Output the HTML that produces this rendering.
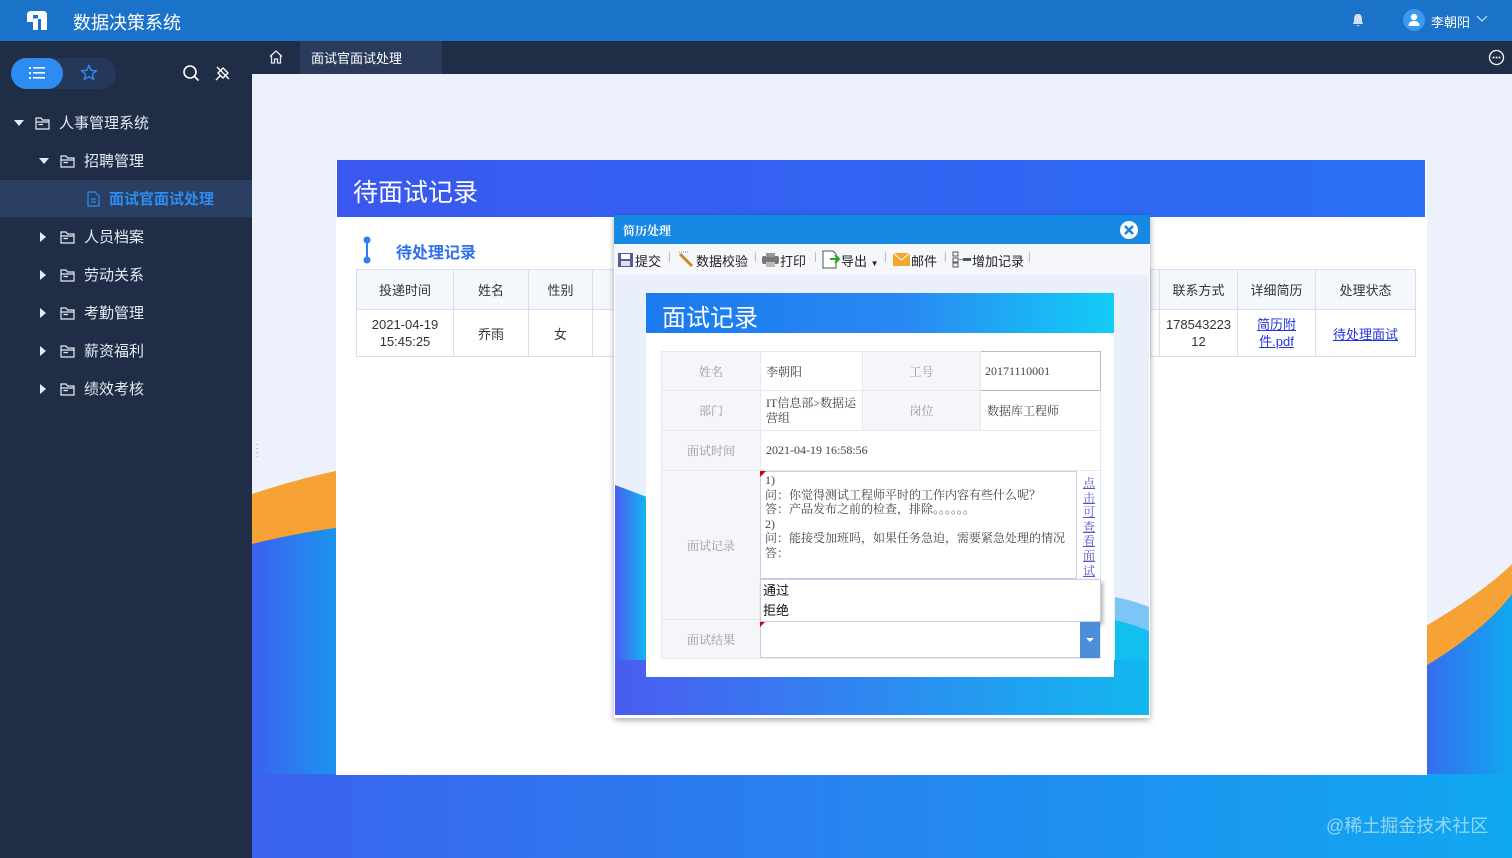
<!DOCTYPE html>
<html><head><meta charset="utf-8"><style>
*{margin:0;padding:0;box-sizing:border-box}
body{width:1512px;height:858px;overflow:hidden;position:relative;font-family:"Liberation Sans","Noto Sans CJK SC",sans-serif;background:#edf1fb}
.abs{position:absolute}
.top{left:0;top:0;width:1512px;height:41px;background:#1b73c9;color:#fff}
.side{left:0;top:41px;width:252px;height:817px;background:#1f2d47;color:#e6ebf3}
.tabs{left:252px;top:41px;width:1260px;height:33px;background:#1f2d47}
.nav{position:absolute;font-size:15px;color:#e6ebf3}
.tri{position:absolute;width:0;height:0}
table{border-collapse:collapse}
.lt td{border:1px solid #d9dff0;text-align:center;font-size:13px;color:#333}
.ft td{border:1px solid #e4e8f0;font-family:"Liberation Serif","Noto Serif CJK SC",serif;font-size:12px;color:#444}
.ft td.l{background:#f4f6fa;color:#999;text-align:center}
</style></head><body>
<div class="abs top">
 <svg class="abs" style="left:26px;top:10px" width="22" height="21"><path d="M1 5 Q1 1 5 1 H17 Q21 1 21 5 V20 H15 V9 H12 V20 H7 V12 H1 Z" fill="#fff"/><rect x="7" y="5" width="5" height="3.5" fill="#1b73c9"/></svg>
 <div class="abs" style="left:73px;top:9px;font-size:18px">数据决策系统</div>
 <svg class="abs" style="left:1352px;top:13px" width="12" height="14"><path d="M6 1 C2 1 2 5 2 8 L1 11 H11 L10 8 C10 5 10 1 6 1Z M4.5 12 H7.5 L6 13.5Z" fill="#cfe2f7"/></svg>
 <div class="abs" style="left:1403px;top:9px;width:22px;height:22px;border-radius:50%;background:#3a9af0"></div>
 <svg class="abs" style="left:1406px;top:12px" width="16" height="16"><circle cx="8" cy="5" r="3.2" fill="#fff"/><path d="M2.5 14 Q2.5 9 8 9 Q13.5 9 13.5 14Z" fill="#fff"/></svg>
 <div class="abs" style="left:1431px;top:12px;font-size:13px">李朝阳</div>
 <svg class="abs" style="left:1476px;top:15px" width="12" height="8"><path d="M1 1 L6 6 L11 1" stroke="#cfe2f7" fill="none" stroke-width="1.2"/></svg>
</div>
<div class="abs side">
 <div class="abs" style="left:11px;top:17px;width:105px;height:31px;border-radius:16px;background:#26385a"></div>
 <div class="abs" style="left:11px;top:17px;width:52px;height:31px;border-radius:16px;background:#2d8cf0"></div>
 <svg class="abs" style="left:29px;top:25px" width="16" height="14"><g fill="#fff"><rect x="0" y="1" width="2" height="2"/><rect x="4" y="1" width="12" height="1.6"/><rect x="0" y="6" width="2" height="2"/><rect x="4" y="6" width="12" height="1.6"/><rect x="0" y="11" width="2" height="2"/><rect x="4" y="11" width="12" height="1.6"/></g></svg>
 <svg class="abs" style="left:80px;top:23px" width="18" height="17"><path d="M9 1.5 L11.2 6.3 L16.3 6.8 L12.4 10.2 L13.6 15.2 L9 12.6 L4.4 15.2 L5.6 10.2 L1.7 6.8 L6.8 6.3Z" stroke="#2d8cf0" stroke-width="1.4" fill="none"/></svg>
 <svg class="abs" style="left:182px;top:23px" width="18" height="18"><circle cx="8" cy="8" r="6" stroke="#fff" stroke-width="1.6" fill="none"/><path d="M12.5 12.5 L16.5 16.5" stroke="#fff" stroke-width="1.8"/></svg>
 <svg class="abs" style="left:214px;top:23px" width="18" height="18"><path d="M4 9 L9 4 L14 9 L9 14Z M2 16 L6 12 M3 3 L15 15" stroke="#fff" stroke-width="1.4" fill="none"/></svg>
 <div class="abs" style="left:0;top:139px;width:252px;height:37px;background:#2a3f62"></div>
</div>
<div class="nav" style="left:0;top:0;width:252px">
 <div class="tri" style="left:14px;top:120px;border:5px solid transparent;border-top:6px solid #e6ebf3;border-bottom:0"></div>
 <div class="tri" style="left:39px;top:158px;border:5px solid transparent;border-top:6px solid #e6ebf3;border-bottom:0"></div>
 <div class="tri" style="left:40px;top:232px;border:5px solid transparent;border-left:6px solid #e6ebf3;border-right:0"></div>
 <div class="tri" style="left:40px;top:270px;border:5px solid transparent;border-left:6px solid #e6ebf3;border-right:0"></div>
 <div class="tri" style="left:40px;top:308px;border:5px solid transparent;border-left:6px solid #e6ebf3;border-right:0"></div>
 <div class="tri" style="left:40px;top:346px;border:5px solid transparent;border-left:6px solid #e6ebf3;border-right:0"></div>
 <div class="tri" style="left:40px;top:384px;border:5px solid transparent;border-left:6px solid #e6ebf3;border-right:0"></div>
</div>
<svg class="abs" style="left:0;top:0" width="252" height="400">
 <defs><g id="f"><path d="M1 2 H6 L7.5 4 H14 V13 H1Z M1 6 H14 M3.5 8.5 H8" stroke="#e6ebf3" stroke-width="1.2" fill="none"/></g></defs>
 <use href="#f" x="35" y="116"/><use href="#f" x="60" y="154"/><use href="#f" x="60" y="230"/><use href="#f" x="60" y="268"/><use href="#f" x="60" y="306"/><use href="#f" x="60" y="344"/><use href="#f" x="60" y="382"/>
 <path d="M88 192 H95 L99 196 V206 H88Z M91 199 H96 M91 202 H96" stroke="#2d8cf0" stroke-width="1.2" fill="none"/>
</svg>
<div class="nav" style="left:59px;top:112px">人事管理系统</div>
<div class="nav" style="left:84px;top:150px">招聘管理</div>
<div class="nav" style="left:109px;top:188px;color:#2d8cf0;font-weight:bold">面试官面试处理</div>
<div class="nav" style="left:84px;top:226px">人员档案</div>
<div class="nav" style="left:84px;top:264px">劳动关系</div>
<div class="nav" style="left:84px;top:302px">考勤管理</div>
<div class="nav" style="left:84px;top:340px">薪资福利</div>
<div class="nav" style="left:84px;top:378px">绩效考核</div>

<div class="abs tabs">
 <svg class="abs" style="left:16px;top:8px" width="16" height="16"><path d="M2 7.5 L8 2 L14 7.5 M3.5 6.5 V14 H6.5 V10 H9.5 V14 H12.5 V6.5" stroke="#e6ebf3" stroke-width="1.3" fill="none"/></svg>
 <div class="abs" style="left:48px;top:0;width:142px;height:33px;background:#2a3b5c;color:#fff;font-size:13px;padding:7px 0 0 11px">面试官面试处理</div>
 <svg class="abs" style="left:1236px;top:8px" width="17" height="17"><circle cx="8.5" cy="8.5" r="7" stroke="#fff" stroke-width="1.3" fill="none"/><g fill="#fff"><circle cx="5.5" cy="8.5" r="1"/><circle cx="8.5" cy="8.5" r="1"/><circle cx="11.5" cy="8.5" r="1"/></g></svg>
</div>
<div class="abs" style="left:252px;top:74px;width:1260px;height:784px;overflow:hidden">
 <svg width="1260" height="784">
  <defs><linearGradient id="bg" x1="0" x2="1"><stop offset="0" stop-color="#3b62ee"/><stop offset="1" stop-color="#10a8f0"/></linearGradient></defs>
  <path d="M0 420 Q60 400 120 390 L120 784 L0 784Z" fill="#f7a235"/>
  <path d="M0 470 Q60 455 120 450 L120 784 L0 784Z" fill="url(#bg)"/>
  <path d="M1160 560 Q1230 520 1260 490 V784 H1160Z" fill="#f7a235"/>
  <path d="M1160 600 Q1230 560 1260 520 V784 H1160Z" fill="url(#bg)"/>
  <rect x="0" y="700" width="1260" height="84" fill="url(#bg)"/>
 </svg>
 <div class="abs" style="left:4px;top:370px;color:#8a95aa;font-size:9px;line-height:4px">:<br>:<br>:</div>
</div>
<div class="abs" style="left:336px;top:160px;width:1091px;height:615px;background:#fff"></div>
<div class="abs" style="left:337px;top:160px;width:1088px;height:57px;background:linear-gradient(90deg,#3a58ee,#2a6ff6);color:#fff;font-size:25px;padding:13px 0 0 16px">待面试记录</div>
<svg class="abs" style="left:361px;top:236px" width="12" height="28"><circle cx="6" cy="4" r="3.5" fill="#2d7ff0"/><circle cx="6" cy="24" r="3.5" fill="#2d7ff0"/><rect x="5" y="4" width="2" height="20" fill="#2d7ff0"/></svg>
<div class="abs" style="left:396px;top:239px;color:#2d6ff0;font-size:16px;font-weight:bold">待处理记录</div>
<table class="abs lt" style="left:356px;top:269px">
 <tr style="height:40px;background:#f4f7fc"><td style="width:97px">投递时间</td><td style="width:75px">姓名</td><td style="width:64px">性别</td><td style="width:30px"></td></tr>
 <tr style="height:47px"><td style="line-height:17px">2021-04-19<br>15:45:25</td><td>乔雨</td><td>女</td><td></td></tr>
</table>
<table class="abs lt" style="left:1150px;top:269px">
 <tr style="height:40px;background:#f4f7fc"><td style="width:9px"></td><td style="width:78px">联系方式</td><td style="width:78px">详细简历</td><td style="width:100px">处理状态</td></tr>
 <tr style="height:47px"><td></td><td style="line-height:17px">178543223<br>12</td><td style="line-height:17px"><u style="color:#2233dd">简历附<br>件.pdf</u></td><td><u style="color:#2233dd">待处理面试</u></td></tr>
</table>

<div class="abs" style="left:614px;top:215px;width:536px;height:503px;background:#fff;box-shadow:0 2px 6px rgba(0,0,0,.35);overflow:hidden">
 <div class="abs" style="left:0;top:0;width:536px;height:29px;background:#1689e5;color:#fff;font-size:12px;font-weight:bold;font-family:'Liberation Serif','Noto Serif CJK SC',serif;padding:7px 0 0 9px">简历处理</div>
 <svg class="abs" style="left:505px;top:5px" width="20" height="20"><circle cx="10" cy="10" r="9" fill="#fff"/><path d="M6 6 L14 14 M14 6 L6 14" stroke="#1689e5" stroke-width="2.6"/></svg>
 <div class="abs" style="left:0;top:29px;width:536px;height:31px;background:#f6f7fa;font-size:13px;color:#222">
  <svg class="abs" style="left:3px;top:8px" width="17" height="16"><rect x="1" y="1" width="15" height="14" fill="#5a5a9a"/><rect x="4" y="2" width="9" height="5" fill="#fff"/><rect x="4" y="9" width="9" height="5" fill="#dde"/></svg>
  <span class="abs" style="left:21px;top:7px">提交</span><span class="abs" style="left:54px;top:8px;color:#aaa;font-size:10px">|</span>
  <svg class="abs" style="left:63px;top:6px" width="18" height="18"><path d="M3 4 L15 16" stroke="#cc8a20" stroke-width="3"/><path d="M2 2 H12" stroke="#888" stroke-dasharray="1 1"/></svg>
  <span class="abs" style="left:82px;top:7px">数据校验</span><span class="abs" style="left:140px;top:8px;color:#aaa;font-size:10px">|</span>
  <svg class="abs" style="left:148px;top:8px" width="17" height="15"><rect x="0" y="4" width="17" height="8" rx="2" fill="#777"/><rect x="4" y="1" width="9" height="4" fill="#999"/><rect x="4" y="10" width="9" height="5" fill="#bbb"/></svg>
  <span class="abs" style="left:166px;top:7px">打印</span><span class="abs" style="left:200px;top:8px;color:#aaa;font-size:10px">|</span>
  <svg class="abs" style="left:208px;top:6px" width="18" height="19"><path d="M1 1 H11 L14 4 V18 H1Z" fill="#fff" stroke="#555"/><path d="M8 9 H17 M13 5 L17 9 L13 13" stroke="#2a2" stroke-width="2" fill="none"/></svg>
  <span class="abs" style="left:227px;top:7px">导出 <span style="font-size:8px">▼</span></span><span class="abs" style="left:270px;top:8px;color:#aaa;font-size:10px">|</span>
  <svg class="abs" style="left:279px;top:9px" width="17" height="13"><rect width="17" height="13" fill="#f0a830"/><path d="M0 0 L8.5 7 L17 0" stroke="#fff" fill="none"/></svg>
  <span class="abs" style="left:297px;top:7px">邮件</span><span class="abs" style="left:330px;top:8px;color:#aaa;font-size:10px">|</span>
  <svg class="abs" style="left:338px;top:7px" width="20" height="17"><rect x="1" y="1" width="5" height="4" fill="none" stroke="#555"/><rect x="1" y="7" width="5" height="4" fill="none" stroke="#555"/><rect x="1" y="12" width="5" height="4" fill="none" stroke="#555"/><rect x="11" y="7" width="8" height="3" fill="#555"/><path d="M7 8.5 H11" stroke="#38d"/></svg>
  <span class="abs" style="left:358px;top:7px">增加记录</span><span class="abs" style="left:414px;top:8px;color:#aaa;font-size:10px">|</span>
 </div>
 <div class="abs" style="left:1px;top:60px;width:534px;height:440px;background:#eaf0fb;overflow:hidden">
  <svg width="534" height="440"><defs><linearGradient id="dg" x1="0" x2="1"><stop offset="0" stop-color="#4a5cf0"/><stop offset="1" stop-color="#12b8f0"/></linearGradient></defs>
   <path d="M0 210 L32 222 V440 H0Z" fill="url(#dg)"/>
   <path d="M500 322 Q520 326 534 332 V440 H500Z" fill="#7cc6f6"/>
   <path d="M500 345 Q520 350 534 356 V440 H500Z" fill="#12c0f0"/>
   <rect x="0" y="385" width="534" height="55" fill="url(#dg)"/></svg>
 </div>
</div>
<div class="abs" style="left:646px;top:293px;width:468px;height:384px;background:#fff"></div>
<div class="abs" style="left:646px;top:293px;width:468px;height:40px;background:linear-gradient(90deg,#1a7aef,#2a88f2 55%,#12cdf6);color:#fff;font-size:24px;padding:5px 0 0 16px">面试记录</div>
<table class="abs ft" style="left:661px;top:351px">
 <tr style="height:39px"><td class="l" style="width:99px">姓名</td><td style="width:102px;padding-left:5px">李朝阳</td><td class="l" style="width:118px">工号</td><td style="width:120px;padding-left:4px;border:1px solid #bbb">20171110001</td></tr>
 <tr style="height:40px"><td class="l">部门</td><td style="padding-left:5px;line-height:15px">IT信息部&gt;数据运营组</td><td class="l">岗位</td><td style="padding-left:6px">数据库工程师</td></tr>
 <tr style="height:40px"><td class="l">面试时间</td><td colspan="3" style="padding-left:5px">2021-04-19 16:58:56</td></tr>
 <tr style="height:149px"><td class="l">面试记录</td><td colspan="3"></td></tr>
 <tr style="height:39px"><td class="l">面试结果</td><td colspan="3"></td></tr>
</table>
<div class="abs" style="left:760px;top:471px;width:317px;height:108px;border:1px solid #c8cde0;font-family:'Liberation Serif','Noto Serif CJK SC',serif;font-size:12px;color:#444;line-height:14.6px;padding:1px 0 0 4px;overflow:hidden">1)<br>问：你觉得测试工程师平时的工作内容有些什么呢？<br>答：产品发布之前的检查，排除。。。。。。<br>2)<br>问：能接受加班吗，如果任务急迫，需要紧急处理的情况<br>答：</div>
<div class="tri abs" style="left:760px;top:471px;border-top:6px solid #c00;border-right:6px solid transparent"></div>
<div class="abs" style="left:1083px;top:476px;width:12px;font-family:'Liberation Serif','Noto Serif CJK SC',serif;font-size:12px;line-height:14.6px;color:#5555cc;text-decoration:underline;height:103px;overflow:hidden">点击可查看面试</div>
<div class="abs" style="left:760px;top:579px;width:341px;height:43px;background:#fff;border:1px solid #c8cde0;box-shadow:2px 3px 4px rgba(0,0,0,.3);font-size:13px;color:#111;line-height:20px;padding:1px 0 0 2px">通过<br>拒绝</div>
<div class="abs" style="left:760px;top:621px;width:340px;height:37px;border:1px solid #c8cde0;background:#fff"></div>
<div class="tri abs" style="left:760px;top:622px;border-top:5px solid #c00;border-right:5px solid transparent"></div>
<div class="abs" style="left:1080px;top:622px;width:20px;height:36px;background:#4a8fd8"></div>
<div class="tri abs" style="left:1086px;top:638px;border:4px solid transparent;border-top:4px solid #fff;border-bottom:0"></div>

<div class="abs" style="left:1326px;top:812px;font-size:18px;color:rgba(255,255,255,.55)">@稀土掘金技术社区</div>
</body></html>
